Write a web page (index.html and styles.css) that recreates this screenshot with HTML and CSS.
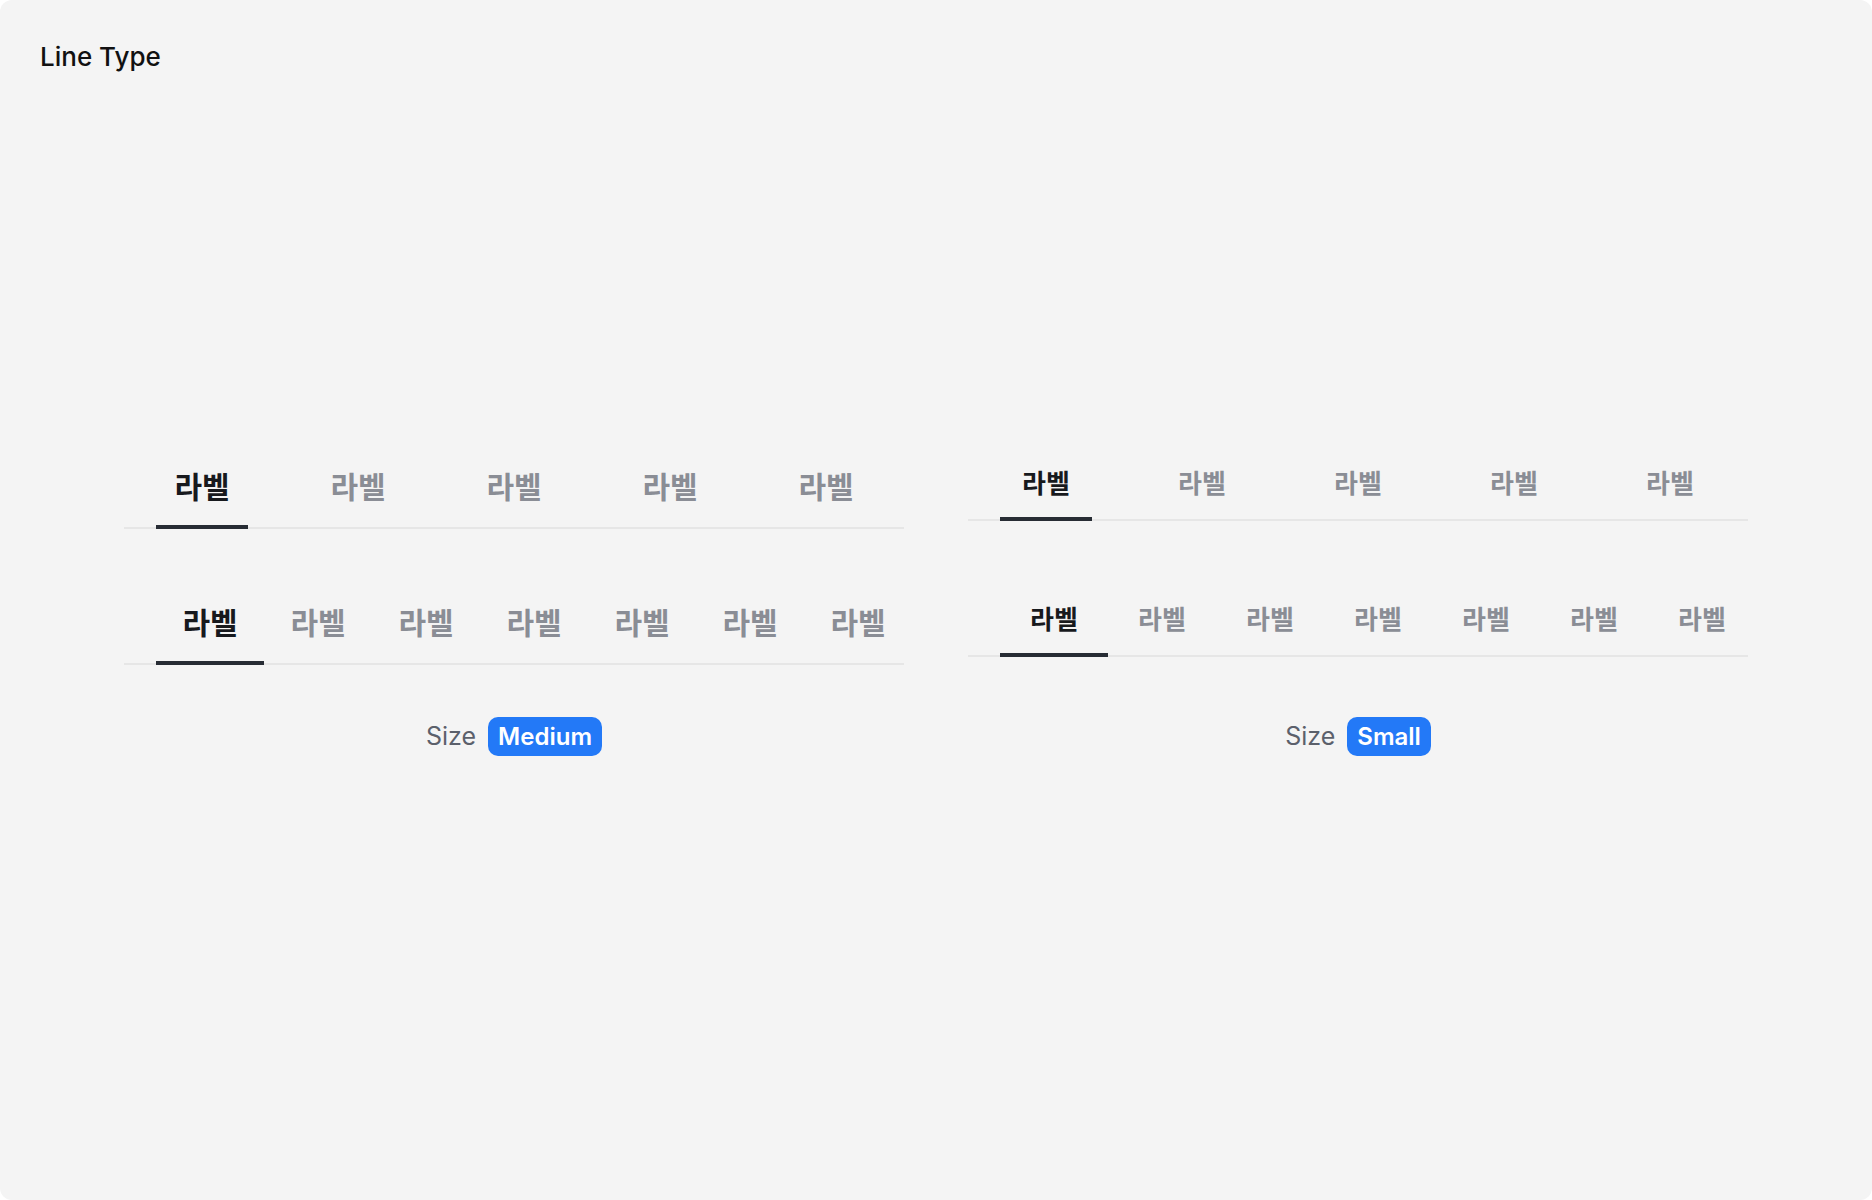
FILE: index.html
```html
<!DOCTYPE html>
<html lang="ko">
<head>
  <meta charset="utf-8">
  <title>Line Type</title>
  <link rel="stylesheet" href="styles.css">
</head>
<body>

  <div class="frame">
    <h1 class="title">Line Type</h1>

    <div class="demo">
      <div class="column medium">
        <div class="tabs tabs-fixed">
          <a href="#" class="tab active">라벨</a>
          <a href="#" class="tab">라벨</a>
          <a href="#" class="tab">라벨</a>
          <a href="#" class="tab">라벨</a>
          <a href="#" class="tab">라벨</a>
        </div>
        <div class="tabs tabs-scroll">
          <a href="#" class="tab active">라벨</a>
          <a href="#" class="tab">라벨</a>
          <a href="#" class="tab">라벨</a>
          <a href="#" class="tab">라벨</a>
          <a href="#" class="tab">라벨</a>
          <a href="#" class="tab">라벨</a>
          <a href="#" class="tab">라벨</a>
        </div>
      </div>

      <div class="column small">
        <div class="tabs tabs-fixed">
          <a href="#" class="tab active">라벨</a>
          <a href="#" class="tab">라벨</a>
          <a href="#" class="tab">라벨</a>
          <a href="#" class="tab">라벨</a>
          <a href="#" class="tab">라벨</a>
        </div>
        <div class="tabs tabs-scroll">
          <a href="#" class="tab active">라벨</a>
          <a href="#" class="tab">라벨</a>
          <a href="#" class="tab">라벨</a>
          <a href="#" class="tab">라벨</a>
          <a href="#" class="tab">라벨</a>
          <a href="#" class="tab">라벨</a>
          <a href="#" class="tab">라벨</a>
        </div>
      </div>

      <div class="size">Size <span class="badge">Medium</span></div>
      <div class="size">Size <span class="badge">Small</span></div>
    </div>
  </div>

</body>
</html>
```

FILE: styles.css
```css
body {
  font-family: Inter, "Noto Sans CJK KR", sans-serif;
  margin: 0;
  padding: 0;
  background-color: #ffffff;
}

.frame {
  display: grid;
  grid-template-rows: 119px 1fr 119px;
  height: 1200px;
  background-color: #f4f4f4;
  border-radius: 12px;
}

.title {
  margin: 0;
  padding: 41px 0 0 40px;
  font-size: 26px;
  font-weight: 500;
  line-height: 32px;
  color: #111111;
}

.demo {
  display: grid;
  grid-template-columns: 780px 780px;
  column-gap: 64px;
  row-gap: 52px;
  justify-content: center;
  align-content: center;
  align-items: start;
}

.column {
  display: flex;
  flex-direction: column;
}

.column.medium {
  gap: 52px;
}

.column.small {
  gap: 60px;
}

.tabs {
  display: flex;
  border-bottom: 2px solid #e6e6e6;
}

.tabs-fixed {
  padding: 0 32px;
  gap: 64px;
}

.tabs-scroll {
  padding-left: 32px;
}

.tab {
  box-sizing: border-box;
  display: flex;
  align-items: center;
  justify-content: center;
  flex-shrink: 0;
  margin-bottom: -2px;
  padding-top: 1px;
  border-bottom: 4px solid transparent;
  font-family: "Noto Sans CJK KR", sans-serif;
  font-weight: 700;
  color: #8a8d95;
  text-decoration: none;
}

.tab.active {
  color: #17191d;
  border-bottom-color: #272c34;
}

.tabs-fixed .tab {
  width: 92px;
}

.tabs-scroll .tab {
  width: 108px;
}

.medium .tab {
  height: 84px;
  font-size: 30px;
}

.small .tab {
  height: 76px;
  font-size: 26px;
}

.size {
  display: flex;
  justify-content: center;
  align-items: center;
  gap: 12px;
  font-size: 25px;
  color: #5b606b;
}

.badge {
  display: flex;
  align-items: center;
  height: 39px;
  padding: 0 10px;
  border-radius: 10px;
  background-color: #2379f7;
  color: #ffffff;
  font-size: 24px;
  font-weight: 600;
}
```
